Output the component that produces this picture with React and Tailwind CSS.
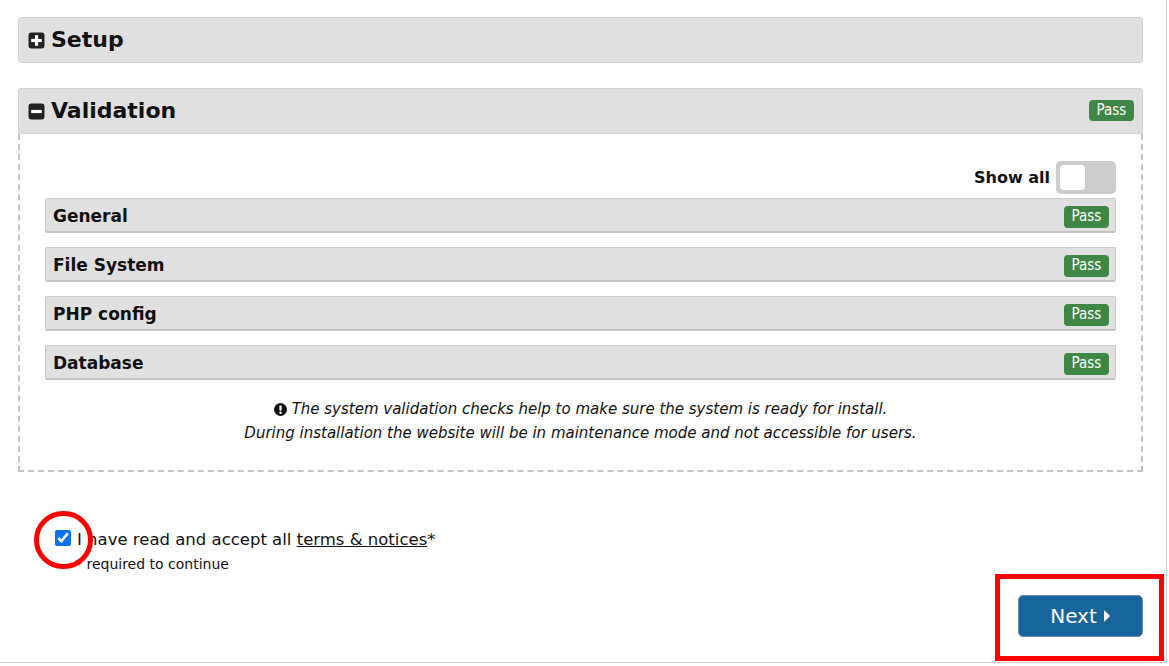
import { useState } from "react";

const PassBadge = ({ big }) => (
    <span className={`inline-flex items-center justify-center rounded-[4px] bg-[#3e8745] text-white text-[15px] leading-none font-['DejaVu_Sans_Condensed','DejaVu_Sans',sans-serif] ${big ? "w-[45px] h-[21px]" : "w-[45px] h-[22px]"}`}>
        Pass
    </span>
);

const SquareIcon = ({ minus }) => (
    <svg width="17" height="17" viewBox="0 0 16 16" className="shrink-0">
        <rect x="0.5" y="0.5" width="15" height="15" rx="2.5" fill="#222" />
        {minus ? (
            <rect x="3" y="6.5" width="10" height="3" fill="#fff" />
        ) : (
            <>
                <rect x="3" y="6.5" width="10" height="3" fill="#fff" />
                <rect x="6.5" y="3" width="3" height="10" fill="#fff" />
            </>
        )}
    </svg>
);

const checks = ["General", "File System", "PHP config", "Database"];

const App = () => {
    const [accepted, setAccepted] = useState(true);
    const [showAll, setShowAll] = useState(false);

    return (
        <div className="w-[1167px] h-[663px] border-r border-b border-[#cfcfcf] bg-white font-['DejaVu_Sans',sans-serif] text-[#111] relative">
            <div className="pl-[18px] pr-[23px] pt-[17px]">
                <div className="h-[46px] flex items-center gap-[6px] px-[9px] bg-[#e0e0e0] border border-[#d3d3d3] rounded-[3px]">
                    <SquareIcon />
                    <h2 className="text-[22px] font-bold leading-none">Setup</h2>
                </div>

                <div className="mt-[25px]">
                    <div className="h-[46px] flex items-center gap-[6px] pl-[9px] pr-[8px] bg-[#e0e0e0] border border-[#d3d3d3] rounded-t-[3px]">
                        <SquareIcon minus />
                        <h2 className="text-[22px] font-bold leading-none">Validation</h2>
                        <div className="ml-auto mb-[3px]">
                            <PassBadge big />
                        </div>
                    </div>
                    <div className="border-2 border-t-0 border-dashed border-[#c4c4c4] px-[25px] pt-[27px] pb-[25px]">
                        <div className="flex justify-end items-center gap-[6px]">
                            <span className="text-[16px] font-bold">Show all</span>
                            <button
                                onClick={() => setShowAll(!showAll)}
                                className={`w-[60px] h-[33px] rounded-[5px] p-[4px] flex ${showAll ? "bg-[#3e8745] justify-end" : "bg-[#cccccc] justify-start"}`}
                            >
                                <span className="w-[25px] h-[25px] bg-white rounded-[4px]" />
                            </button>
                        </div>
                        <div className="mt-[4px] flex flex-col gap-[14px]">
                            {checks.map((c) => (
                                <div key={c} className="h-[35px] flex items-center justify-between pl-[7px] pr-[6px] bg-[#e0e0e0] border border-[#cbcbcb] border-b-2 border-b-[#c4c4c4] rounded-[2px]">
                                    <span className="text-[17px] font-bold pt-[3px]">{c}</span>
                                    <span className="pt-[2px]">
                                        <PassBadge />
                                    </span>
                                </div>
                            ))}
                        </div>
                        <div className="mt-[17px] text-center italic text-[15px] leading-[24px]">
                            <p className="flex items-center justify-center gap-[5px]">
                                <svg width="13" height="13" viewBox="0 0 16 16">
                                    <circle cx="8" cy="8" r="8" fill="#111" />
                                    <rect x="6.7" y="3" width="2.6" height="6.5" rx="1" fill="#fff" />
                                    <circle cx="8" cy="12" r="1.5" fill="#fff" />
                                </svg>
                                The system validation checks help to make sure the system is ready for install.
                            </p>
                            <p>During installation the website will be in maintenance mode and not accessible for users.</p>
                        </div>
                    </div>
                </div>

                <div className="mt-[53px] pl-[37px]">
                    <label className="flex items-center gap-[6px] text-[16.5px] leading-[22px]">
                        <input
                            type="checkbox"
                            checked={accepted}
                            onChange={(e) => setAccepted(e.target.checked)}
                            className="w-[16px] h-[16px] accent-[#0b73ef] m-0"
                        />
                        <span className="pt-[4px]">
                            I have read and accept all{" "}
                            <a href="#terms" className="underline">terms &amp; notices</a>*
                        </span>
                    </label>
                    <p className="text-[14px] leading-none mt-[6px] pl-[20px]">* required to continue</p>
                </div>

                <div className="flex justify-end mt-[24px]">
                    <button className="w-[125px] h-[42px] flex items-center justify-center gap-[6px] rounded-[5px] bg-[#17659d] border border-[#6c8aa0] text-white text-[20px]">
                        Next
                        <svg width="8" height="12" viewBox="0 0 8 12">
                            <path d="M1 0 L7 6 L1 12 Z" fill="#fff" />
                        </svg>
                    </button>
                </div>
            </div>

            {/* annotation overlays */}
            <div className="absolute left-[34px] top-[511px] w-[59px] h-[58px] rounded-full border-[5px] border-[#ff0000] pointer-events-none" />
            <div className="absolute left-[995px] top-[574px] w-[169px] h-[87px] border-[5px] border-[#ff0000] pointer-events-none" />
        </div>
    );
};

export default App;
